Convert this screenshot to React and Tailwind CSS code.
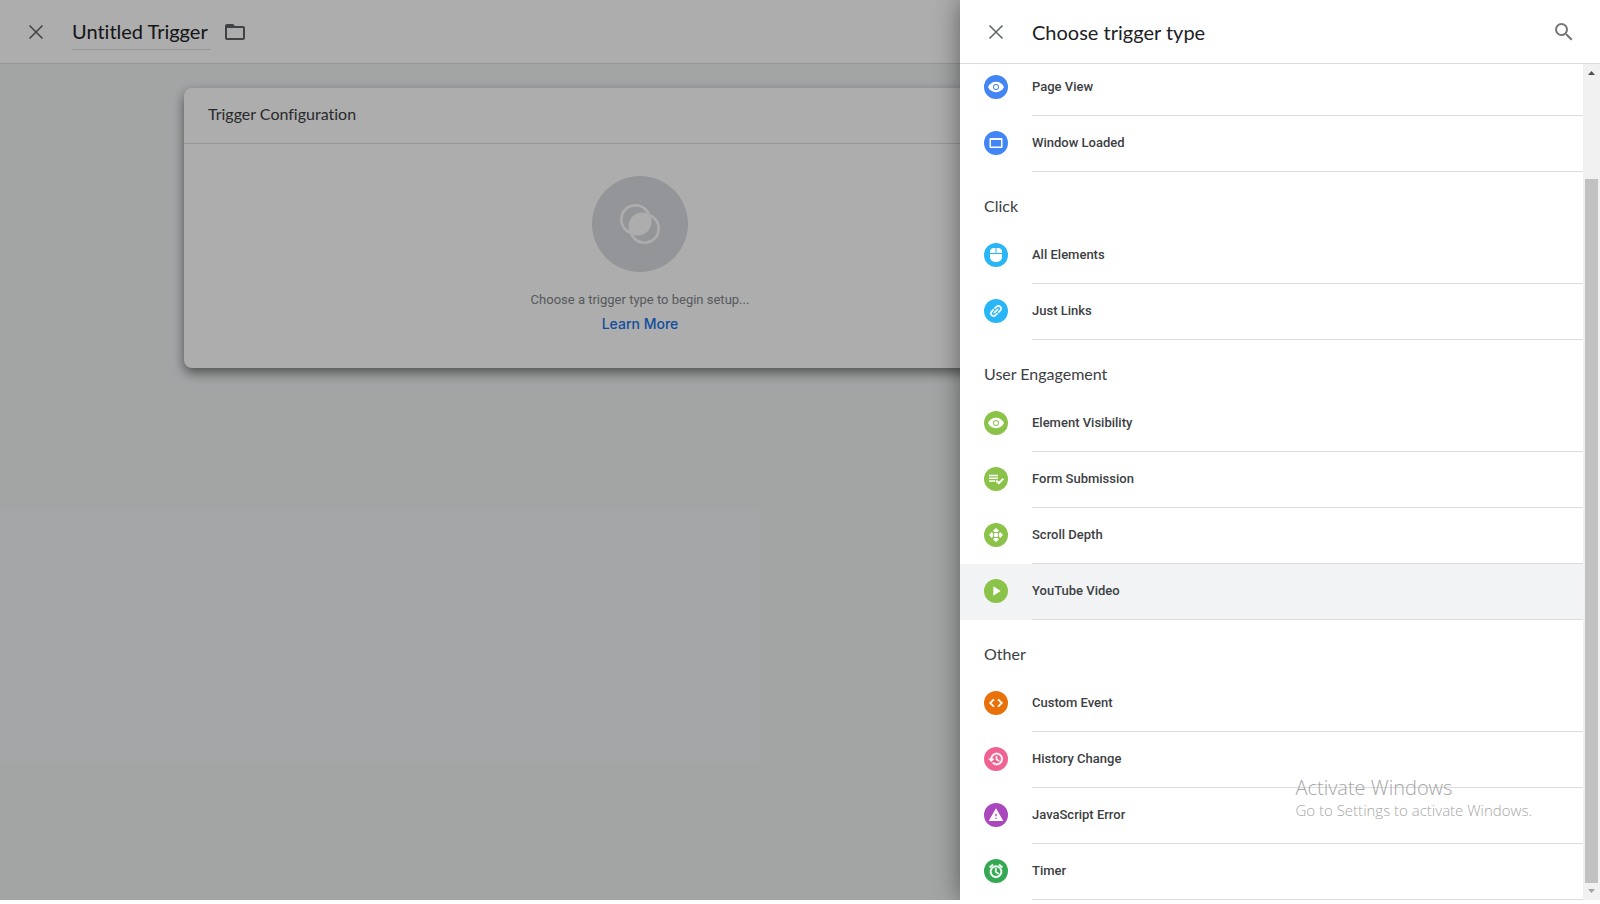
import { useLayoutEffect, useRef } from "react";
import { MdAlarm, MdCode, MdFolderOpen, MdHistory, MdPlayArrow, MdSearch, MdWarning } from "react-icons/md";

const groups = [
    {
        title: null,
        items: [
            { name: "Page View", icon: EyeIcon, color: "bg-[#4285f4]" },
            { name: "Window Loaded", icon: WindowIcon, color: "bg-[#4285f4]" },
        ],
    },
    {
        title: "Click",
        items: [
            { name: "All Elements", icon: MouseIcon, color: "bg-[#29b6f6]" },
            { name: "Just Links", icon: LinkIcon, color: "bg-[#29b6f6]" },
        ],
    },
    {
        title: "User Engagement",
        items: [
            { name: "Element Visibility", icon: EyeIcon, color: "bg-[#8bc34a]" },
            { name: "Form Submission", icon: FormIcon, color: "bg-[#8bc34a]" },
            { name: "Scroll Depth", icon: ScrollIcon, color: "bg-[#8bc34a]" },
            { name: "YouTube Video", icon: MdPlayArrow, color: "bg-[#8bc34a]", active: true },
        ],
    },
    {
        title: "Other",
        items: [
            { name: "Custom Event", icon: MdCode, color: "bg-[#e8710a]", bold: true },
            { name: "History Change", icon: MdHistory, color: "bg-[#f06292]", bold: true },
            { name: "JavaScript Error", icon: MdWarning, color: "bg-[#ab47bc]" },
            { name: "Timer", icon: MdAlarm, color: "bg-[#34a853]", bold: true },
        ],
    },
];

export default function App() {
    return (
        <div className="relative h-screen overflow-hidden bg-white pb-1 font-['Roboto',sans-serif]">
            <div className="flex h-full flex-col bg-[#f1f3f4]">
                <TriggerHeader />
                <main className="mx-auto mt-6 flex w-full max-w-[1232px]">
                    <TriggerCard />
                    <div className="w-80 shrink-0" />
                </main>
            </div>

            {/* Scrim and drawer sit over the editor */}
            <div className="absolute inset-x-0 top-0 bottom-1 flex justify-end overflow-hidden bg-black/32">
                <TriggerTypeDrawer />
            </div>

            <div className="pointer-events-none absolute right-17 bottom-21 font-['Open_Sans','Noto_Sans',sans-serif] font-light text-[#a6a6a6]">
                <p className="text-xl leading-6">Activate Windows</p>
                <p className="text-[15px] leading-5">Go to Settings to activate Windows.</p>
            </div>
        </div>
    );
}

function TriggerHeader() {
    return (
        <header className="flex h-16 shrink-0 items-center border-b border-[#dadce0] bg-white px-6">
            <button aria-label="Close" className="flex size-6 items-center justify-center text-[#5f6368]">
                <CloseIcon />
            </button>
            <input
                aria-label="Trigger name"
                defaultValue="Untitled Trigger"
                className="ml-6 h-9 w-[139px] border-b border-[#dadce0] font-['Lato',sans-serif] text-xl text-[#202124] outline-none [font-variant-ligatures:none]"
            />
            <button aria-label="Choose folder" className="ml-3 text-[#5f6368]">
                <MdFolderOpen className="size-6" />
            </button>
        </header>
    );
}

function TriggerCard() {
    return (
        <section className="flex-1 rounded-lg bg-white shadow-[0_5px_12px_rgba(0,0,0,0.5)]">
            <h2 className="flex h-14 items-center border-b border-[#dadce0] px-6 pb-1 font-['Lato',sans-serif] text-base text-[#3c4043] [font-variant-ligatures:none]">
                Trigger Configuration
            </h2>
            <div className="flex flex-col items-center pt-8 pb-8">
                <div className="flex size-24 items-center justify-center rounded-full bg-[#dadce0]">
                    <svg className="size-10" viewBox="0 0 40 40">
                        <circle cx="15.5" cy="15.5" r="14.2" fill="none" stroke="#fff" strokeWidth="2.6" />
                        <circle cx="24.5" cy="24.5" r="14.2" fill="none" stroke="#fff" strokeWidth="2.6" />
                        <path d="M29.7 10.3A14.2 14.2 0 0 1 10.3 29.7A14.2 14.2 0 0 1 29.7 10.3Z" fill="#fff" />
                    </svg>
                </div>
                <p className="mt-4 text-[13px] leading-6 text-[#80868b]">Choose a trigger type to begin setup...</p>
                <a href="#learn-more" className="font-['Inter',sans-serif] text-sm leading-6 font-medium text-[#1a73e8]">
                    Learn More
                </a>
            </div>
        </section>
    );
}

function TriggerTypeDrawer() {
    const listRef = useRef(null);

    useLayoutEffect(() => {
        // Open on the last group
        listRef.current.scrollTop = listRef.current.scrollHeight;
    }, []);

    return (
        <aside className="flex w-2/5 flex-col bg-white shadow-[0_0_24px_rgba(0,0,0,0.45)]">
            <header className="flex h-16 shrink-0 items-center border-b border-[#dadce0] px-6">
                <button aria-label="Close" className="flex size-6 items-center justify-center text-[#5f6368]">
                    <CloseIcon />
                </button>
                <h1 className="ml-6 flex-1 font-['Lato',sans-serif] text-xl text-[#202124]">Choose trigger type</h1>
                <button aria-label="Search" className="text-[#757575]">
                    <MdSearch className="size-6" />
                </button>
            </header>

            <div className="flex min-h-0 flex-1">
                <div ref={listRef} className="flex-1 overflow-y-auto [scrollbar-width:none]">
                    {groups.map((group, idx) => (
                        <section key={idx}>
                            {group.title && (
                                <h2 className="flex h-14 items-center px-6 pt-3 font-['Lato',sans-serif] text-base leading-6 text-[#3c4043]">
                                    {group.title}
                                </h2>
                            )}
                            <ul>
                                {group.items.map((item) => (
                                    <TriggerRow key={item.name} item={item} />
                                ))}
                            </ul>
                        </section>
                    ))}
                </div>
                <ScrollTrack />
            </div>
        </aside>
    );
}

function TriggerRow({ item }) {
    const Icon = item.icon;

    return (
        <li>
            <button className={`flex h-14 w-full items-center pl-6 text-left ${item.active ? "bg-[#f1f3f4]" : ""}`}>
                <span className={`mb-0.5 flex size-6 items-center justify-center rounded-full text-white ${item.color}`}>
                    <Icon className={`size-4 ${item.bold ? "[&>path:last-child]:stroke-1" : ""}`} />
                </span>
                <span className="ml-6 flex h-full flex-1 items-center border-b border-[#dadce0] pb-0.5 text-[13px] font-medium text-[#3c4043]">
                    {item.name}
                </span>
            </button>
        </li>
    );
}

function ScrollTrack() {
    return (
        <div className="flex w-[17px] flex-col items-center bg-[#f1f1f1]">
            <svg className="h-[17px] w-[17px] shrink-0" viewBox="0 0 17 17">
                <path d="M5 11h7L8.5 7z" fill="#505050" />
            </svg>
            <div className="mt-[98px] w-[13px] flex-1 bg-[#c1c1c1]" />
            <svg className="h-[17px] w-[17px] shrink-0" viewBox="0 0 17 17">
                <path d="M5 6h7L8.5 10z" fill="#a3a3a3" />
            </svg>
        </div>
    );
}

function CloseIcon() {
    return (
        <svg className="size-4" viewBox="0 0 16 16" fill="none" stroke="currentColor" strokeWidth="1.5">
            <path d="M1.5 1.5l13 13M14.5 1.5l-13 13" />
        </svg>
    );
}

function EyeIcon({ className }) {
    return (
        <svg className={className} viewBox="0 0 16 16" fill="currentColor">
            <path
                fillRule="evenodd"
                d="M0 8C1.4 4.8 4.4 2.8 8 2.8S14.6 4.8 16 8C14.6 11.2 11.6 13.2 8 13.2S1.4 11.2 0 8zM8 5a3 3 0 1 0 0 6a3 3 0 1 0 0-6zM8 5.9a2.1 2.1 0 1 1 0 4.2a2.1 2.1 0 1 1 0-4.2z"
            />
        </svg>
    );
}

function WindowIcon({ className }) {
    return (
        <svg className={className} viewBox="0 0 16 16" fill="currentColor">
            <path fillRule="evenodd" d="M2.5 3h11a1 1 0 0 1 1 1v8a1 1 0 0 1-1 1h-11a1 1 0 0 1-1-1V4a1 1 0 0 1 1-1zM3 5v6.500h10V5z" />
        </svg>
    );
}

function MouseIcon({ className }) {
    return (
        <svg className={className} viewBox="0 0 16 16" fill="currentColor">
            <path d="M2 6V5a4 4 0 0 1 4-4h1.500v5zM8.500 1H10a4 4 0 0 1 4 4v1H8.500zM2 7h12v3a5 5 0 0 1-5 5H7a5 5 0 0 1-5-5z" />
        </svg>
    );
}

function LinkIcon({ className }) {
    return (
        <svg className={className} viewBox="0 0 24 24" fill="currentColor" stroke="currentColor" strokeWidth="0.8">
            <g transform="rotate(-45 12 12)">
                <path d="M3.9 12c0-1.71 1.39-3.1 3.1-3.1h4V7H7c-2.76 0-5 2.24-5 5s2.24 5 5 5h4v-1.900H7c-1.71 0-3.1-1.39-3.1-3.1zM8 13h8v-2H8v2zm9-6h-4v1.900h4c1.71 0 3.1 1.39 3.1 3.1s-1.39 3.1-3.1 3.1h-4V17h4c2.76 0 5-2.24 5-5s-2.24-5-5-5z" />
            </g>
        </svg>
    );
}

function FormIcon({ className }) {
    return (
        <svg className={className} viewBox="0 0 16 16" fill="none" stroke="currentColor">
            <path d="M1 4.500h9M1 7.300h9M1 10.100h6" strokeWidth="1.5" />
            <path d="M8 9.600l2.800 2.500 4.600-4.300" strokeWidth="2" />
        </svg>
    );
}

function ScrollIcon({ className }) {
    return (
        <svg className={className} viewBox="0 0 16 16" fill="currentColor">
            <circle cx="8" cy="8" r="2.3" />
            <path d="M8 1l3 2.700-1.300 1.300H6.300L5 3.700zM8 15l3-2.700-1.300-1.300H6.300L5 12.300zM1 8l2.700-3 1.300 1.300v3.400L3.700 11zM15 8l-2.700-3-1.300 1.300v3.400l1.300 1.300z" />
        </svg>
    );
}
